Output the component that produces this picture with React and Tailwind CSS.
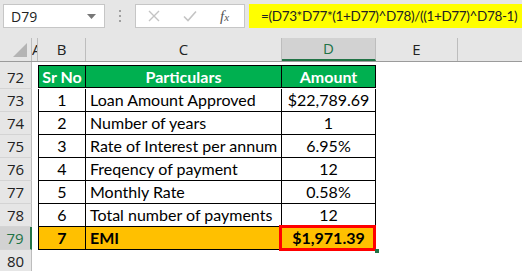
import React from 'react';

const rows = [
    { n: 73, sr: '1', label: 'Loan Amount Approved', value: '$22,789.69' },
    { n: 74, sr: '2', label: 'Number of years', value: '1' },
    { n: 75, sr: '3', label: 'Rate of Interest per annum', value: '6.95%' },
    { n: 76, sr: '4', label: 'Freqency of payment', value: '12' },
    { n: 77, sr: '5', label: 'Monthly Rate', value: '0.58%' },
    { n: 78, sr: '6', label: 'Total number of payments', value: '12' },
];

function RowHead({ n, selected, h = 'h-[23px]' }) {
    return (
        <div
            className={`w-[32px] shrink-0 ${h} flex items-center justify-center border-b border-[#d4d4d4] ${selected ? 'bg-[#d2d2d2] text-[#217346] border-r-2 border-r-[#217346]' : 'bg-[#e6e6e6] text-[#222] border-r border-r-[#bdbdbd]'
                } text-[15px] font-['Open_Sans',sans-serif]`}
        >
            {n}
        </div>
    );
}

function App() {
    return (
        <div className="w-[522px] h-[271px] overflow-hidden bg-white font-['Lato',sans-serif] text-black">
            {/* Formula bar */}
            <div className="h-[38px] bg-[#e6e6e6] flex items-start pt-[4px]">
                <div className="shrink-0 ml-[3px] w-[102px] h-[24px] bg-white border border-[#c6c6c6] flex items-center justify-between pl-[7px] pr-[8px] font-['Open_Sans',sans-serif] text-[14px] text-[#222]">
                    <span>D79</span>
                    <svg width="9" height="5" viewBox="0 0 9 5"><path d="M0 0h9L4.5 5z" fill="#777" /></svg>
                </div>
                <div className="shrink-0 w-[30px] h-[24px] flex flex-col items-center justify-center gap-[3px]">
                    <span className="w-[2px] h-[2px] bg-[#a0a0a0]" />
                    <span className="w-[2px] h-[2px] bg-[#a0a0a0]" />
                    <span className="w-[2px] h-[2px] bg-[#a0a0a0]" />
                </div>
                <div className="shrink-0 w-[110px] h-[24px] bg-white border border-[#c6c6c6] flex items-center pl-[12px]">
                    <svg width="12" height="12" viewBox="0 0 12 12" className="shrink-0"><path d="M1 1l10 10M11 1L1 11" stroke="#c4c4c4" strokeWidth="1.4" /></svg>
                    <svg width="14" height="12" viewBox="0 0 14 12" className="shrink-0 ml-[23px]"><path d="M1 6.5l4 4L13 1.5" stroke="#c4c4c4" strokeWidth="1.6" fill="none" /></svg>
                    <span className="ml-[23px] font-['Liberation_Serif',serif] italic text-[15px] text-[#555] leading-none">f<span className="text-[11px]">x</span></span>
                </div>
                <div className="ml-[4px] flex-1 min-w-0 overflow-hidden h-[24px] bg-[#ffff00] flex items-center pl-[12px] text-[13.5px] tracking-[-0.35px] text-[#222] whitespace-nowrap">
                    =(D73*D77*(1+D77)^D78)/((1+D77)^D78-1)
                </div>
            </div>

            {/* Column headers */}
            <div className="h-[24px] flex bg-[#e6e6e6] border-b border-[#9b9b9b] font-['Open_Sans',sans-serif] text-[15px] text-[#222]">
                <div className="w-[32px] shrink-0 flex items-end justify-end pr-[4px] pb-[4px] border-r border-[#bdbdbd]">
                    <svg width="14" height="14" viewBox="0 0 14 14"><path d="M14 0V14H0z" fill="#b4b4b4" /></svg>
                </div>
                <div className="w-[6px] shrink-0 overflow-hidden border-r border-[#bdbdbd] flex items-center leading-none">A</div>
                <div className="w-[48px] shrink-0 flex items-center justify-center border-r border-[#bdbdbd]">B</div>
                <div className="w-[196px] shrink-0 flex items-center justify-center border-r border-[#bdbdbd]">C</div>
                <div className="w-[94px] shrink-0 flex items-center justify-center bg-[#d2d2d2] text-[#217346] border-r border-[#bdbdbd] border-b-2 border-b-[#217346]">D</div>
                <div className="w-[82px] shrink-0 flex items-center justify-center border-r border-[#bdbdbd]">E</div>
                <div className="flex-1" />
            </div>

            {/* Row 71 sliver */}
            <div className="h-[4px] flex">
                <div className="w-[32px] h-[4px] bg-[#e6e6e6] border-r border-[#bdbdbd]" />
            </div>

            {/* Row 72 header */}
            <div className="flex">
                <RowHead n={72} />
                <div className="w-[6px] shrink-0" />
                <div className="flex border-l border-t border-black bg-[#00b050] text-white font-bold text-[16px] h-[23px] -mt-px">
                    <div className="w-[47px] flex items-center justify-center border-r border-b border-black">Sr No</div>
                    <div className="w-[196px] flex items-center justify-center border-r border-b border-black">Particulars</div>
                    <div className="w-[94px] flex items-center justify-center border-r border-b border-black">Amount</div>
                </div>
            </div>

            {rows.map(r => (
                <div key={r.n} className="flex">
                    <RowHead n={r.n} />
                    <div className="w-[6px] shrink-0" />
                    <div className="flex border-l border-black text-[16px] h-[23px]">
                        <div className="w-[47px] flex items-center justify-center border-r border-b border-black">{r.sr}</div>
                        <div className="w-[196px] flex items-center pl-[4px] border-r border-b border-black whitespace-nowrap">{r.label}</div>
                        <div className="w-[94px] flex items-center justify-center border-r border-b border-black">{r.value}</div>
                    </div>
                </div>
            ))}

            {/* Row 79 EMI */}
            <div className="flex">
                <RowHead n={79} selected />
                <div className="w-[6px] shrink-0" />
                <div className="flex border-l border-black bg-[#ffc000] font-bold text-[16px] h-[23px]">
                    <div className="w-[47px] flex items-center justify-center border-r border-b border-black">7</div>
                    <div className="w-[196px] flex items-center pl-[4px] border-r border-b border-black">EMI</div>
                    <div className="relative w-[94px] flex items-center justify-center border-r border-b border-black">
                        $1,971.39
                        <span className="absolute -left-[3px] -top-[2px] -right-[1px] -bottom-[2px] border-[3px] border-[#ff0000]" />
                        <span className="absolute -right-[4px] -bottom-[4px] w-[4px] h-[4px] bg-[#217346]" />
                    </div>
                </div>
            </div>

            {/* Row 80 */}
            <div className="flex">
                <RowHead n={80} />
            </div>
        </div>
    );
}

export default App;
